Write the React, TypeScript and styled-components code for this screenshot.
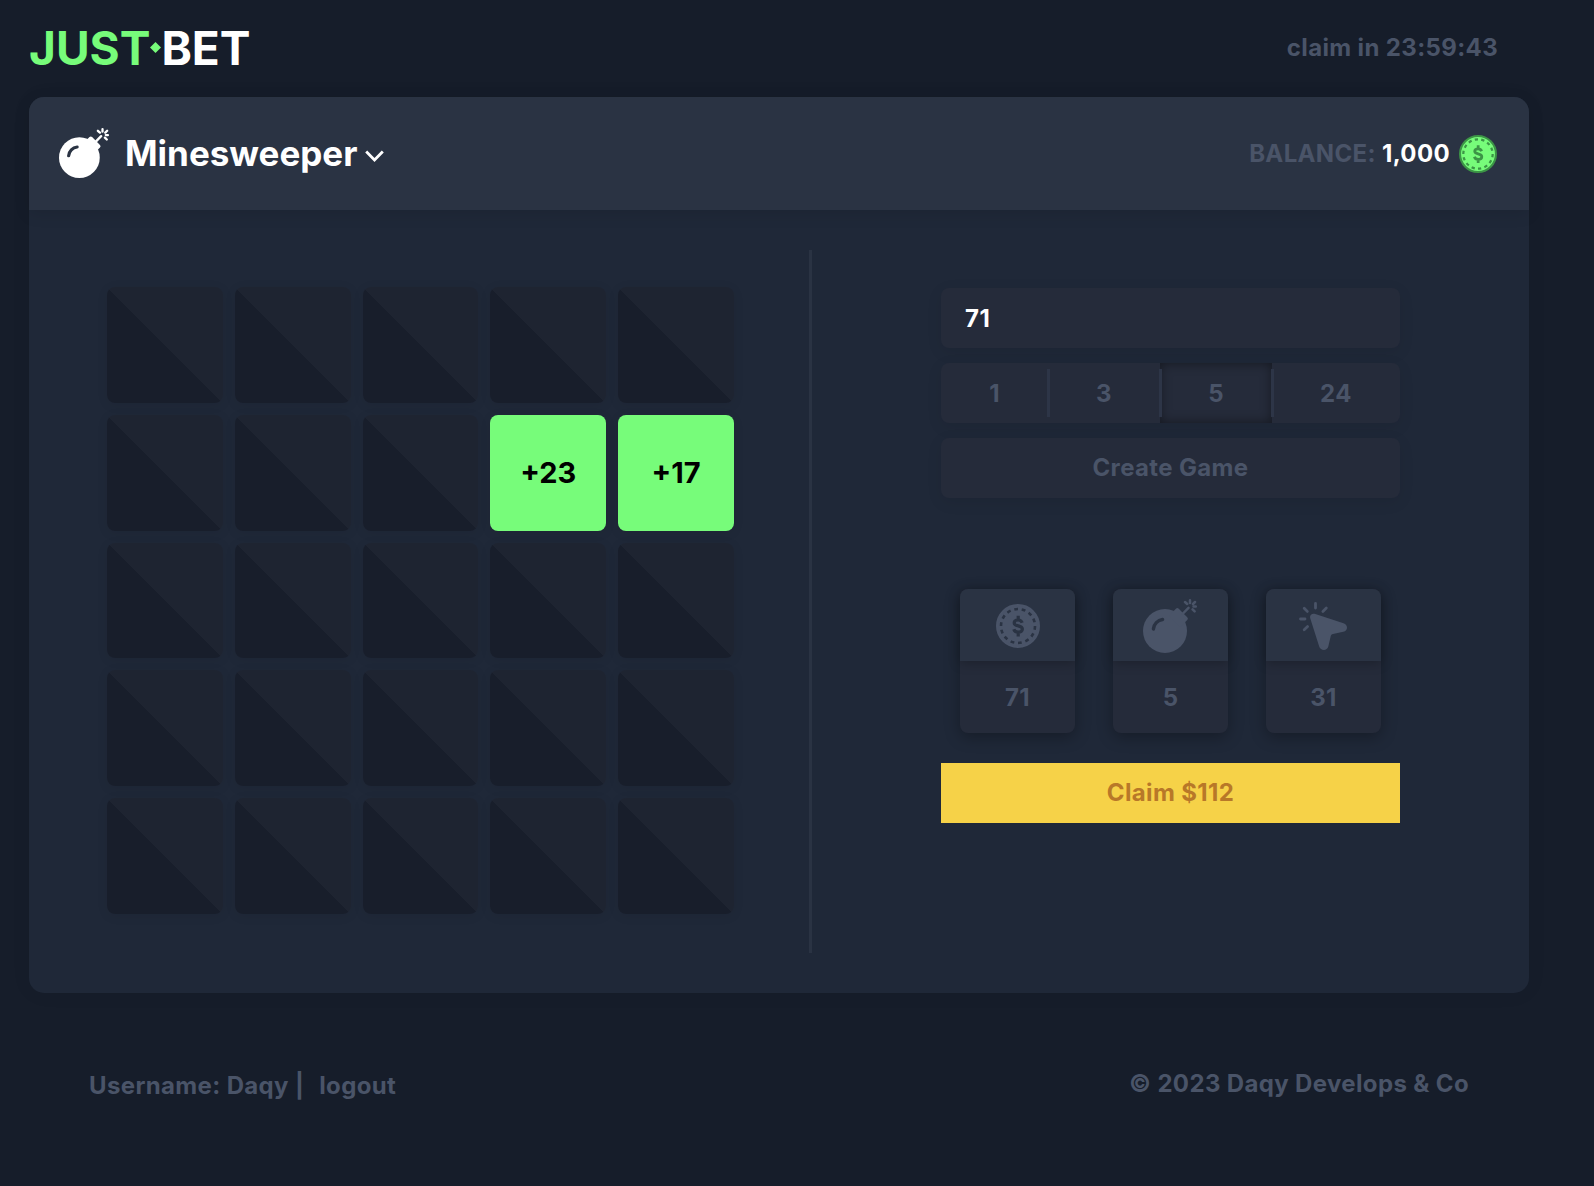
import { useState } from "react";
import styled, { createGlobalStyle, css } from "styled-components";

const color = {
  page: "#161d2a",
  panel: "#1f2838",
  raised: "#2a3343",
  field: "#252b3a",
  muted: "#4a5468",
  green: "#77fc7a",
  coinEdge: "#3c9446",
  yellow: "#f6d248",
  amber: "#b87828",
};

const GlobalStyle = createGlobalStyle`
  *, *::before, *::after { box-sizing: border-box; }
  body {
    margin: 0;
    background: ${color.page};
    color: ${color.muted};
    font: 650 24px/30px Inter, "Liberation Sans", sans-serif;
    letter-spacing: 0.015em;
  }
  button, input { font: inherit; letter-spacing: inherit; }
`;

const Page = styled.div`
  padding: 0 65px 0 29px;
`;

const TopBar = styled.header`
  display: flex;
  align-items: center;
  justify-content: space-between;
  height: 97px;
  padding: 0 31px 2px 0;
`;

const Logo = styled.a`
  display: flex;
  align-items: center;
  color: #fff;
  font-size: 46px;
  line-height: 58px;
  letter-spacing: 0;
  text-decoration: none;
`;

const LogoAccent = styled.span`
  color: ${color.green};
`;

const Panel = styled.main`
  border-radius: 15px;
  background: ${color.panel};
  box-shadow: 0 0 20px rgba(0, 0, 0, 0.06);
`;

const PanelHeader = styled.div`
  display: flex;
  align-items: center;
  justify-content: space-between;
  height: 113px;
  padding: 0 32px 0 30px;
  border-radius: 15px 15px 0 0;
  background: ${color.raised};
  box-shadow: 0 4px 16px rgba(0, 0, 0, 0.1);
`;

const GamePicker = styled.button`
  display: flex;
  align-items: center;
  padding: 0 0 2px;
  border: 0;
  background: none;
  color: #fff;
  font-size: 35px;
  line-height: 44px;
  letter-spacing: 0;
  cursor: pointer;
`;

const GameName = styled.span`
  margin: 0 8px 0 16px;
`;

const Chevron = styled.svg`
  margin-top: 6px;
`;

const Balance = styled.div`
  display: flex;
  align-items: center;
  gap: 9px;
`;

const Amount = styled.strong`
  color: #fff;
  font-weight: inherit;
`;

const PanelBody = styled.div`
  display: grid;
  grid-template-columns: 52fr 48fr;
  padding: 40px 0;
`;

const Board = styled.div`
  display: grid;
  grid-template-columns: repeat(5, 1fr);
  gap: 12px;
  padding: 37px 75px 39px 78px;
`;

const Tile = styled.button<{ $open: boolean }>`
  aspect-ratio: 1;
  min-width: 0;
  padding: 0;
  border: 0;
  border-radius: 8px;
  color: #000;
  font-size: 29px;
  letter-spacing: 0;
  box-shadow: 0 2px 12px rgba(0, 0, 0, 0.07);
  ${({ $open }) =>
    $open
      ? css`background: ${color.green};`
      : css`background: linear-gradient(45deg, #181e2b 50%, #1e2431 50%);`}
`;

const Controls = styled.div`
  display: flex;
  flex-direction: column;
  align-items: center;
  padding: 38px 0;
  border-left: 3px solid ${color.raised};
`;

const Form = styled.form`
  display: flex;
  flex-direction: column;
  gap: 15px;
  width: 64%;
`;

const fieldBox = css`
  width: 100%;
  height: 60px;
  border: 0;
  border-radius: 8px;
  background: ${color.field};
  box-shadow: 0 4px 16px rgba(0, 0, 0, 0.08);
`;

const BetInput = styled.input`
  ${fieldBox}
  padding: 0 24px;
  color: #fff;
  outline: 0;
`;

const CreateButton = styled.button`
  ${fieldBox}
  color: ${color.muted};
`;

const MineOptions = styled.div`
  ${fieldBox}
  display: flex;
  align-items: center;
`;

const MineOption = styled.label<{ $selected: boolean }>`
  display: flex;
  flex: 1 1 auto;
  align-items: center;
  justify-content: center;
  height: 100%;
  padding-top: 2px;
  cursor: pointer;
  box-shadow: ${({ $selected }) => ($selected ? "inset 0 0 12px rgba(0, 0, 0, 0.45)" : "none")};
`;

const HiddenRadio = styled.input`
  position: absolute;
  width: 1px;
  height: 1px;
  margin: 0;
  opacity: 0;
`;

const OptionDivider = styled.span`
  z-index: 1;
  width: 3px;
  height: 48px;
  margin: 0 -2px 0 -1px;
  background: #2d3547;
`;

const Stats = styled.div`
  display: flex;
  justify-content: space-around;
  width: 64%;
  margin: 91px 0 30px;
`;

const StatCard = styled.div`
  width: 25%;
  border-radius: 8px;
  background: ${color.field};
  box-shadow: 0 4px 16px rgba(0, 0, 0, 0.3);
`;

const StatIcon = styled.div`
  display: flex;
  align-items: center;
  justify-content: center;
  height: 72px;
  padding-top: 2px;
  border-radius: 8px 8px 0 0;
  background: ${color.raised};
  box-shadow: 0 2px 12px rgba(0, 0, 0, 0.25);
`;

const StatValue = styled.div`
  display: flex;
  align-items: center;
  justify-content: center;
  height: 72px;
  padding-top: 2px;
`;

const ClaimButton = styled.button`
  width: 64%;
  height: 60px;
  border: 0;
  background: ${color.yellow};
  color: ${color.amber};
`;

const Footer = styled.footer`
  display: flex;
  justify-content: space-between;
  padding: 76px 60px;
`;

const Account = styled.div`
  display: flex;
  gap: 15px;
  padding-top: 2px;
`;

const LogoutButton = styled.button`
  padding: 0;
  border: 0;
  background: none;
  color: inherit;
`;

function Bomb({ size }: { size: number }) {
  return (
    <svg width={size} height={size} viewBox="0 0 54 54" fill="none" aria-hidden="true">
      <circle cx="22" cy="32" r="22" fill="currentColor" />
      <rect x="-8" y="0" width="16" height="12" rx="2" transform="translate(40 14) rotate(45)" fill="currentColor" />
      <path
        d="M40 14.5 45.5 8.8M47 1.3V4M42 3 44.2 5M52 3 50 5M50.5 7.6H52.8M49.6 10.4 51.6 12.4"
        stroke="currentColor"
        strokeWidth="2.5"
        strokeLinecap="round"
      />
      <path d="M10.4 30A10.5 10.5 0 0 1 19.6 20.5" stroke={color.raised} strokeWidth="3.4" strokeLinecap="round" />
    </svg>
  );
}

function Coin({ size, face, mark, edge }: { size: number; face: string; mark: string; edge: string }) {
  return (
    <svg width={size} height={size} viewBox="0 0 44 44" fill="none" aria-hidden="true">
      <circle cx="22" cy="22" r="20.8" fill={face} stroke={edge} strokeWidth="2.4" />
      <circle
        cx="22"
        cy="22"
        r="17"
        pathLength="28"
        stroke={mark}
        strokeWidth="2.6"
        strokeDasharray="1 1"
      />
      <path
        d="M26.2 18.8C25.4 16.6 23.8 16 22.2 16 19.8 16 18.2 17.2 18.2 18.9 18.2 23 26.4 20.6 26.4 25.1 26.4 27 24.6 28.2 22.3 28.2 20.2 28.2 18.4 27.2 17.8 25.2M22.2 11.8V16M22.2 28.2V32.4"
        stroke={mark}
        strokeWidth="3.2"
      />
    </svg>
  );
}

function Pointer() {
  return (
    <svg width="48" height="48" viewBox="0 0 48 48" fill="none" aria-hidden="true">
      <path
        d="M11.3 16.5C10.2 13 13 10.8 16.3 12L44.5 21.3C49.2 23 49.2 28.8 44.3 29.8L34 32C32.6 32.3 32 33 31.7 34.3L29.3 44.5C28.2 49 21.6 49 20.2 44.5Z"
        fill="currentColor"
      />
      <path
        d="M16.5 1.5V6M5.2 6.2 8.3 9.4M1.5 17H6M8.6 24.6 5.2 27.8M27.3 6 23.9 9.4"
        stroke="currentColor"
        strokeWidth="2.8"
        strokeLinecap="round"
      />
    </svg>
  );
}

const rewards: Record<number, string> = { 8: "+23", 9: "+17" };
const mineCounts = [1, 3, 5, 24];

export default function App() {
  const [bet, setBet] = useState("71");
  const [mines, setMines] = useState(5);

  return (
    <Page>
      <GlobalStyle />
      <TopBar>
        <Logo href="#">
          <LogoAccent>JUST</LogoAccent>
          <svg width="11" height="11" viewBox="0 0 11 11" aria-hidden="true">
            <path d="M5.5 0 11 5.5 5.5 11 0 5.5Z" fill={color.green} />
          </svg>
          <span>BET</span>
        </Logo>
        <span>claim in 23:59:43</span>
      </TopBar>

      <Panel>
        <PanelHeader>
          <GamePicker type="button">
            <Bomb size={50} />
            <GameName>Minesweeper</GameName>
            <Chevron width="19" height="12" viewBox="0 0 19 12" fill="none" aria-hidden="true">
              <path d="M1.2 1.6 9.5 9.9 17.8 1.6" stroke="#fff" strokeWidth="2.8" />
            </Chevron>
          </GamePicker>
          <Balance>
            <span>
              BALANCE: <Amount>1,000</Amount>
            </span>
            <Coin size={38} face={color.green} mark={color.coinEdge} edge={color.coinEdge} />
          </Balance>
        </PanelHeader>

        <PanelBody>
          <Board>
            {Array.from({ length: 25 }, (_, i) => (
              <Tile key={i} type="button" $open={i in rewards} aria-label={rewards[i] ?? `Tile ${i + 1}`}>
                {rewards[i]}
              </Tile>
            ))}
          </Board>

          <Controls>
            <Form onSubmit={(e) => e.preventDefault()}>
              <BetInput aria-label="Bet" value={bet} onChange={(e) => setBet(e.target.value)} />
              <MineOptions role="radiogroup" aria-label="Mines">
                {mineCounts.flatMap((n, i) => [
                  i > 0 && <OptionDivider key={`divider-${n}`} />,
                  <MineOption key={n} $selected={n === mines}>
                    <HiddenRadio type="radio" name="mines" checked={n === mines} onChange={() => setMines(n)} />
                    {n}
                  </MineOption>,
                ])}
              </MineOptions>
              <CreateButton type="submit">Create Game</CreateButton>
            </Form>

            <Stats>
              <StatCard>
                <StatIcon>
                  <Coin size={44} face={color.muted} mark={color.raised} edge={color.muted} />
                </StatIcon>
                <StatValue>71</StatValue>
              </StatCard>
              <StatCard>
                <StatIcon>
                  <Bomb size={54} />
                </StatIcon>
                <StatValue>5</StatValue>
              </StatCard>
              <StatCard>
                <StatIcon>
                  <Pointer />
                </StatIcon>
                <StatValue>31</StatValue>
              </StatCard>
            </Stats>

            <ClaimButton type="button">Claim $112</ClaimButton>
          </Controls>
        </PanelBody>
      </Panel>

      <Footer>
        <Account>
          <span>Username: Daqy |</span>
          <LogoutButton type="button">logout</LogoutButton>
        </Account>
        <span>© 2023 Daqy Develops &amp; Co</span>
      </Footer>
    </Page>
  );
}
